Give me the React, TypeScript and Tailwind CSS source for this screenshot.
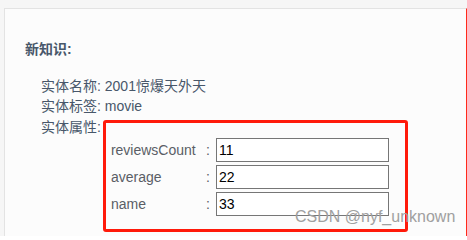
const attrs = [
  { key: "reviewsCount", value: "11" },
  { key: "average", value: "22" },
  { key: "name", value: "33" },
]

export default function App() {
  return (
    <div
      className="relative w-[467px] h-[236px] overflow-hidden bg-[#f6f6f6] pt-[8px] pl-[4px] text-[14px] text-[#48576a]"
      style={{ fontFamily: '"Liberation Sans", "Noto Sans CJK SC", sans-serif' }}
    >
      <div className="h-full bg-[#fcfcfc] border-t border-l border-[#e3e3e3] border-r border-r-[#ff2a1a] pt-[30px] pl-[20px]">
        <div className="font-bold leading-[20px]">新知识:</div>

        <div className="mt-[17px] pl-[16px]">
          <div className="leading-[20px]">实体名称: 2001惊爆天外天</div>
          <div className="leading-[20px]">实体标签: movie</div>
          <div className="flex items-start mt-[1px]">
            <span className="leading-[20px]">实体属性:</span>
            <div className="ml-[2px] mt-[3px] w-[305px] h-[112px] border-[3px] border-[#ff1a0a] rounded-[3px] pt-[15px] pl-[5px] pr-[16px] flex flex-col gap-[3px]">
              {attrs.map((a) => (
                <div key={a.key} className="flex items-center h-[24px] text-[#5a5e66]">
                  <span className="w-[94px]">{a.key}</span>
                  <span className="w-[11px] pl-[1px]">:</span>
                  <input
                    className="w-[173px] h-[24px] border border-[#767676] bg-white px-[2px] text-[14px] text-black outline-none"
                    defaultValue={a.value}
                  />
                </div>
              ))}
            </div>
          </div>
        </div>
      </div>

      <div className="absolute left-[295px] top-[208px] text-[16px] leading-[18px] text-[#a0a0a0] whitespace-nowrap">
        CSDN @nyf_unknown
      </div>
    </div>
  )
}
